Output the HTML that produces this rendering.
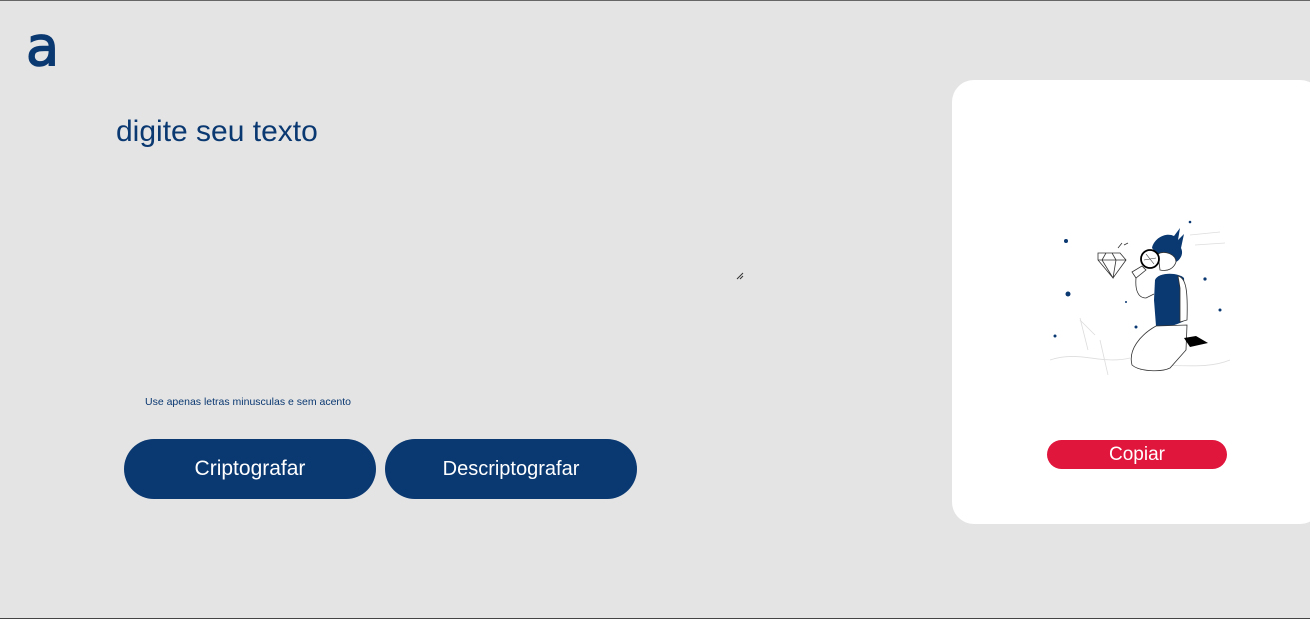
<!DOCTYPE html>
<html><head><meta charset="utf-8"><style>
html,body{margin:0;padding:0}
body{width:1310px;height:619px;background:#e4e4e4;position:relative;overflow:hidden;font-family:"Liberation Sans",sans-serif}
.top{position:absolute;left:0;right:0;top:0;height:1px;background:#666}
.bot{position:absolute;left:0;right:0;bottom:0;height:1px;background:#444}
.logo{position:absolute;left:26px;top:22px;color:#0a3871;font-size:54px;line-height:50px;font-family:"DejaVu Sans",sans-serif;-webkit-text-stroke:1.5px #0a3871}
h1{position:absolute;left:116px;top:115px;margin:0;font-weight:normal;font-size:30px;color:#0a3871}
.grip{position:absolute;left:736px;top:272px;width:8px;height:8px}
.hint{position:absolute;left:145px;top:396px;font-size:10.5px;color:#0a3871}
.btn{position:absolute;top:439px;width:252px;height:60px;border-radius:30px;background:#0a3871;color:#fff;font-size:21px;display:flex;align-items:center;justify-content:center}
.card{position:absolute;left:952px;top:80px;width:370px;height:444px;background:#fff;border-radius:22px}
.copy{position:absolute;left:1047px;top:440px;width:180px;height:29px;border-radius:15px;background:#e0163d;color:#fff;font-size:19px;display:flex;align-items:center;justify-content:center}
</style></head><body>
<div class="top"></div>
<div class="logo">a</div>
<h1>digite seu texto</h1>
<svg class="grip" viewBox="0 0 8 8"><path d="M1 7L7 1M4 7L7 4" stroke="#333" stroke-width="1"/></svg>
<div class="hint">Use apenas letras minusculas e sem acento</div>
<div class="btn" style="left:124px">Criptografar</div>
<div class="btn" style="left:385px;font-size:20px">Descriptografar</div>
<div class="card"></div>
<svg style="position:absolute;left:1040px;top:210px" width="200" height="180" viewBox="0 0 200 180">
<g fill="none" stroke="#ddd" stroke-width="0.8"><path d="M10 150C40 140 60 155 90 148 M100 160C130 150 160 162 190 150 M40 108L48 140 M40 110L55 125 M60 130L68 165 M150 25L180 22 M155 35L185 33"/></g>
<g fill="#0a3871"><circle cx="26" cy="31" r="2"/><circle cx="28" cy="84" r="2.5"/><circle cx="15" cy="126" r="1.5"/><circle cx="150" cy="12" r="1.3"/><circle cx="165" cy="69" r="1.6"/><circle cx="180" cy="100" r="1.5"/><circle cx="96" cy="117" r="1.5"/><circle cx="86" cy="92" r="1"/></g>
<g fill="none" stroke="#333" stroke-width="0.8"><path d="M58 43L80 43L86 50L73 68L58 50Z M58 50L86 50 M66 43L62 50L73 68L76 50L72 43 M78 38L82 33 M84 35L88 33"/></g>
<path d="M112 38C114 28 126 22 134 26L140 18L138 30L144 24L141 38C144 44 140 50 136 52L120 48Z" fill="#0a3871"/>
<path d="M118 44C124 40 136 44 136 52C134 58 128 62 120 60Z" fill="#fff" stroke="#333" stroke-width="0.8"/>
<path d="M92 62L102 56L106 60L96 68Z" fill="#fff" stroke="#333" stroke-width="0.8"/>
<path d="M96 68C95 80 98 88 106 88L114 84" fill="none" stroke="#333" stroke-width="0.8"/>
<circle cx="110" cy="49" r="9" fill="none" stroke="#000" stroke-width="1.8"/>
<path d="M106 44L114 54 M104 50L116 48" stroke="#333" stroke-width="0.6"/>
<path d="M115 70C118 62 138 62 144 68L146 110C135 116 125 118 116 116L114 90Z" fill="#0a3871"/>
<path d="M138 66C146 68 148 80 147 110L140 112L140 78Z" fill="#fff" stroke="#333" stroke-width="0.8"/>
<path d="M116 116C100 125 88 140 92 155C100 162 122 162 130 158L146 140L147 115Z" fill="#fff" stroke="#333" stroke-width="0.8"/>
<path d="M144 128L156 126L168 133L150 137Z" fill="#000"/>
</svg>
<div class="copy">Copiar</div>
<div class="bot"></div>
</body></html>
